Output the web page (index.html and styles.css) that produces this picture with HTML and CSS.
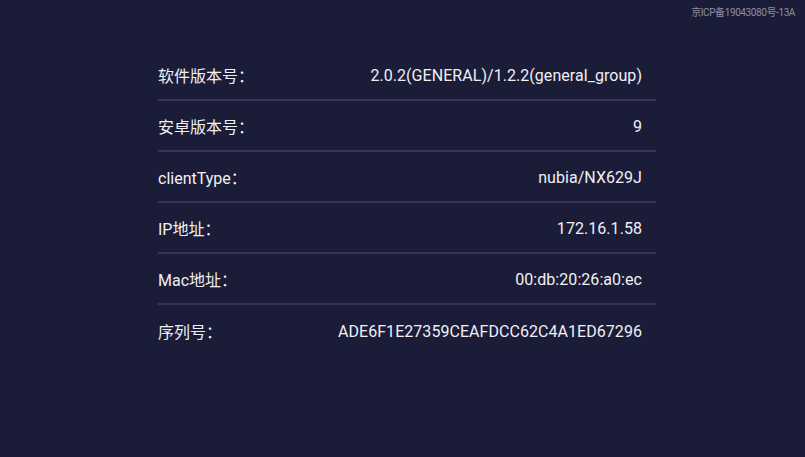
FILE: index.html
```html
<!DOCTYPE html>
<html lang="zh-CN">
<head>
  <meta charset="UTF-8" />
  <meta name="viewport" content="width=device-width, initial-scale=1.0"/>
  <title>关于本机</title>
  <link rel="stylesheet" href="styles.css">
</head>
<body>
  <div class="icp">京ICP备19043080号-13A</div>

  <main class="info-list">
    <div class="info-row">
      <span class="info-label">软件版本号：</span>
      <span class="info-value">2.0.2(GENERAL)/1.2.2(general_group)</span>
    </div>
    <div class="info-row">
      <span class="info-label">安卓版本号：</span>
      <span class="info-value">9</span>
    </div>
    <div class="info-row">
      <span class="info-label">clientType：</span>
      <span class="info-value">nubia/NX629J</span>
    </div>
    <div class="info-row">
      <span class="info-label">IP地址：</span>
      <span class="info-value">172.16.1.58</span>
    </div>
    <div class="info-row">
      <span class="info-label">Mac地址：</span>
      <span class="info-value">00:db:20:26:a0:ec</span>
    </div>
    <div class="info-row">
      <span class="info-label">序列号：</span>
      <span class="info-value">ADE6F1E27359CEAFDCC62C4A1ED67296</span>
    </div>
  </main>
</body>
</html>
```

FILE: styles.css
```css
:root {
  --bg-color: #1b1c38;
  --text-color: #f0f0f4;
  --line-color: #35364f;
  --muted: #8d8ea3;
}

* {
  margin: 0;
  padding: 0;
  box-sizing: border-box;
}

body {
  background-color: var(--bg-color);
  color: var(--text-color);
  font-family: Roboto, "Noto Sans CJK SC", sans-serif;
  width: 805px;
  height: 457px;
  overflow: hidden;
}

.icp {
  display: flex;
  justify-content: flex-end;
  padding: 7px 10px 0 0;
  font-size: 10px;
  line-height: 12px;
  color: var(--muted);
  letter-spacing: -0.4px;
}

.info-list {
  width: 498px;
  margin: 31px 0 0 158px;
}

.info-row {
  display: flex;
  align-items: center;
  justify-content: space-between;
  height: 51px;
  padding: 1px 14px 0 0;
  border-bottom: 2px solid var(--line-color);
  font-size: 16px;
}

.info-row:last-child {
  border-bottom: none;
}

.info-value {
  white-space: nowrap;
  letter-spacing: 0.05px;
}
```
